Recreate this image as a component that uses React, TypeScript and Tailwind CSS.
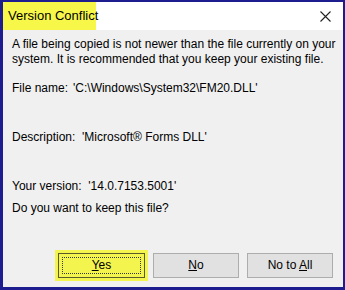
import React from "react";

function Btn({ label, u, rest, focus }: { label?: string; u: string; rest: string; focus?: boolean }) {
  if (focus) {
    return (
      <div className="p-[3px] bg-[#f4f44e]">
        <div className="w-[87px] h-[25px] border border-[#5a5a2a] bg-[#f4f44e] p-[3px]">
          <div className="h-full border border-dotted border-[#3a3a3a] flex items-center justify-center">
            <span><span className="underline">{u}</span>{rest}</span>
          </div>
        </div>
      </div>
    );
  }
  return (
    <div className="w-[86px] h-[25px] border border-[#adadad] bg-[#e1e1e1] flex items-center justify-center">
      <span>{label}<span className="underline">{u}</span>{rest}</span>
    </div>
  );
}

export default function App() {
  return (
    <div className="w-[345px] h-[290px] bg-[#1d1d8f] pl-[3px] pt-[2px] pr-[2px] pb-[3px]" style={{ fontFamily: '"Liberation Sans", Arial, sans-serif' }}>
      <div className="h-full flex flex-col bg-[#f0f0f0] text-[12px] text-black">
        {/* title bar */}
        <div className="h-[28px] bg-white flex items-center justify-between shrink-0">
          <div className="h-full bg-[#f7f74a] flex items-center pl-[5px] w-[93px] text-[13px] whitespace-nowrap">Version Conflict</div>
          <svg width="11" height="11" viewBox="0 0 11 11" className="mr-[12px]">
            <path d="M0.5 0.5 L10.5 10.5 M10.5 0.5 L0.5 10.5" stroke="#222" strokeWidth="1.1" />
          </svg>
        </div>
        {/* body */}
        <div className="flex-1 flex flex-col pl-[9px] pr-[6px] pt-[7px] leading-[15px]">
          <p>A file being copied is not newer than the file currently on your system. It is recommended that you keep your existing file.</p>
          <div className="mt-[14px] flex">
            <span className="w-[61px]">File name:</span>
            <span>'C:\Windows\System32\FM20.DLL'</span>
          </div>
          <div className="mt-[34px]">Description:&nbsp; 'Microsoft® Forms DLL'</div>
          <div className="mt-[34px]">Your version:&nbsp; '14.0.7153.5001'</div>
          <div className="mt-[7px]">Do you want to keep this file?</div>
          <div className="mt-auto mb-[6px] flex justify-end items-center gap-[8px] pr-[4px]">
            <div className="-mr-[3px]"><Btn u="Y" rest="es" focus /></div>
            <Btn u="N" rest="o" />
            <Btn label="No to " u="A" rest="ll" />
          </div>
        </div>
      </div>
    </div>
  );
}
